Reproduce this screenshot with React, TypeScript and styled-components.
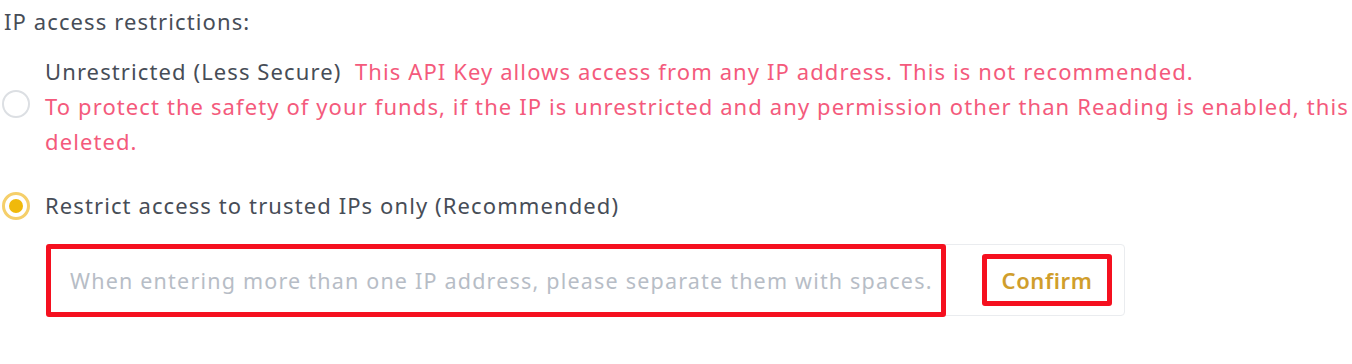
import React from "react";
import styled, { createGlobalStyle } from "styled-components";

const Global = createGlobalStyle`
  html, body { margin: 0; padding: 0; background: #fff; overflow: hidden; }
  body { font-family: "Noto Sans", "Open Sans", Arial, sans-serif; }
`;

const Page = styled.div`
  width: 1352px;
  height: 364px;
  padding: 4px 0 0 4px;
  box-sizing: border-box;
  font-size: 22px;
  letter-spacing: 1.1px;
  line-height: 35px;
  color: #474d57;
  overflow: hidden;
`;

const Heading = styled.div`
  color: #474d57;
`;

const OptionRow = styled.div<{ $mt: number; $top?: boolean }>`
  display: flex;
  align-items: ${(p) => (p.$top ? "flex-start" : "center")};
  gap: 15px;
  margin-top: ${(p) => p.$mt}px;
  margin-left: -2px;
`;

const Radio = styled.span<{ $checked?: boolean; $offset?: number }>`
  flex: none;
  width: 28px;
  height: 28px;
  box-sizing: border-box;
  border-radius: 50%;
  border: ${(p) => (p.$checked ? "3px solid #f5cf6a" : "2px solid #dcdfe3")};
  display: flex;
  align-items: center;
  justify-content: center;
  margin-top: ${(p) => p.$offset ?? 0}px;
  &::after {
    content: "";
    display: ${(p) => (p.$checked ? "block" : "none")};
    width: 14px;
    height: 14px;
    border-radius: 50%;
    background: #f0b90b;
  }
`;

const TextBlock = styled.div`
  white-space: nowrap;
  min-width: 0;
`;

const Line = styled.div``;

const Label = styled.span`
  color: #474d57;
`;

const Warn = styled.span`
  color: #f45a7c;
`;

const InputGroup = styled.div`
  margin: 21px 0 0 42px;
  width: 1079px;
  height: 72px;
  box-sizing: border-box;
  border: 1px solid #eaecef;
  border-radius: 4px;
  display: flex;
  align-items: center;
`;

const InputField = styled.div`
  align-self: stretch;
  margin: -1px 0 -2px -1px;
  width: 900px;
  box-sizing: border-box;
  border: 5px solid #f5101f;
  border-radius: 3px;
  display: flex;
  align-items: center;
  padding-left: 19px;
  color: #b7bdc6;
  font-size: 21.5px;
  letter-spacing: 1.2px;
  white-space: nowrap;
  overflow: hidden;
`;

const ConfirmButton = styled.button`
  margin-left: 36px;
  width: 130px;
  height: 52px;
  box-sizing: border-box;
  border: 5px solid #f5101f;
  border-radius: 3px;
  background: #fff;
  color: #d09e2c;
  font-family: inherit;
  font-size: 22px;
  letter-spacing: 0.6px;
  font-weight: 600;
  padding: 0;
  cursor: pointer;
`;

export default function App() {
  return (
    <>
      <Global />
      <Page>
        <Heading>IP access restrictions:</Heading>
        <OptionRow $mt={15} $top>
          <Radio $offset={36} />
          <TextBlock>
            <Line>
              <Label>Unrestricted (Less Secure)</Label>
              <Warn>
                {"\u00a0 "}This API Key allows access from any IP address. This is not recommended.
              </Warn>
            </Line>
            <Line>
              <Warn>
                To protect the safety of your funds, if the IP is unrestricted and any permission other than Reading is enabled, this API Key will be
              </Warn>
            </Line>
            <Line>
              <Warn>deleted.</Warn>
            </Line>
          </TextBlock>
        </OptionRow>
        <OptionRow $mt={29}>
          <Radio $checked />
          <Label>Restrict access to trusted IPs only (Recommended)</Label>
        </OptionRow>
        <InputGroup>
          <InputField>When entering more than one IP address, please separate them with spaces.</InputField>
          <ConfirmButton>Confirm</ConfirmButton>
        </InputGroup>
      </Page>
    </>
  );
}
